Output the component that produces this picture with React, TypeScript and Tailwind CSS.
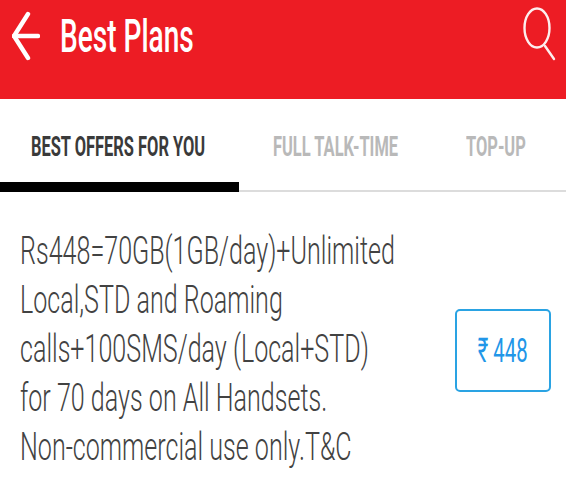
export default function App() {
  const lines = [
    "Rs448=70GB(1GB/day)+Unlimited",
    "Local,STD and Roaming",
    "calls+100SMS/day (Local+STD)",
    "for 70 days on All Handsets.",
    "Non-commercial use only.T&C",
  ];
  return (
    <div className="w-[566px] h-[500px] bg-white overflow-hidden font-['Roboto',sans-serif]">
      <header className="h-[99px] bg-[#ed1c24] flex items-start justify-between pl-[12px] pr-[10px] text-white">
        <div className="flex items-center pt-[9px] gap-[20px]">
          <svg width="28" height="50" viewBox="0 0 28 50" fill="none" stroke="white" strokeWidth="4.4" strokeLinecap="round" strokeLinejoin="round">
            <path d="M16 3 L2 25 L16 47" />
            <path d="M2 25 H26" />
          </svg>
          <span className="text-[46px] leading-[54px] font-medium whitespace-nowrap origin-left scale-x-[0.61] inline-block">Best Plans</span>
        </div>
        <svg className="mt-[7px]" width="34" height="56" viewBox="0 0 34 56" fill="none" stroke="#fdeeee" strokeWidth="2.4" strokeLinecap="round">
          <ellipse cx="15" cy="21" rx="12.5" ry="19.5" />
          <path d="M23 39 L32 52" />
        </svg>
      </header>
      <nav className="h-[93px] relative flex items-start pt-[31px] font-bold text-[28px] leading-[34px]">
        <div className="w-[239px] pl-[31px] text-[#3a3a3a] whitespace-nowrap"><span className="inline-block origin-left scale-x-[0.587]">BEST OFFERS FOR YOU</span></div>
        <div className="w-[227px] pl-[34px] text-[#b9b9b9] whitespace-nowrap"><span className="inline-block origin-left scale-x-[0.587]">FULL TALK-TIME</span></div>
        <div className="text-[#b9b9b9] whitespace-nowrap"><span className="inline-block origin-left scale-x-[0.587]">TOP-UP</span></div>
        <div className="absolute left-0 right-0 bottom-0 h-[2px] bg-[#dcdcdc]" />
        <div className="absolute left-0 bottom-0 w-[239px] h-[10px] bg-black" />
      </nav>
      <main className="flex items-center justify-between pl-[20px] pr-[15px] pt-[35px]">
        <div className="text-[#424242] text-[38px] leading-[49px] font-light whitespace-nowrap w-[400px]">
          {lines.map((l) => (
            <div key={l} className="origin-left scale-x-[0.66]">{l}</div>
          ))}
        </div>
        <div className="w-[96px] h-[83px] mt-[1px] border-[2.5px] border-[#2aa3e3] rounded-[5px] flex items-center justify-center text-[#2196e8] text-[34px] font-normal whitespace-nowrap">
          <span className="inline-block scale-x-[0.6]">₹ 448</span>
        </div>
      </main>
    </div>
  );
}
